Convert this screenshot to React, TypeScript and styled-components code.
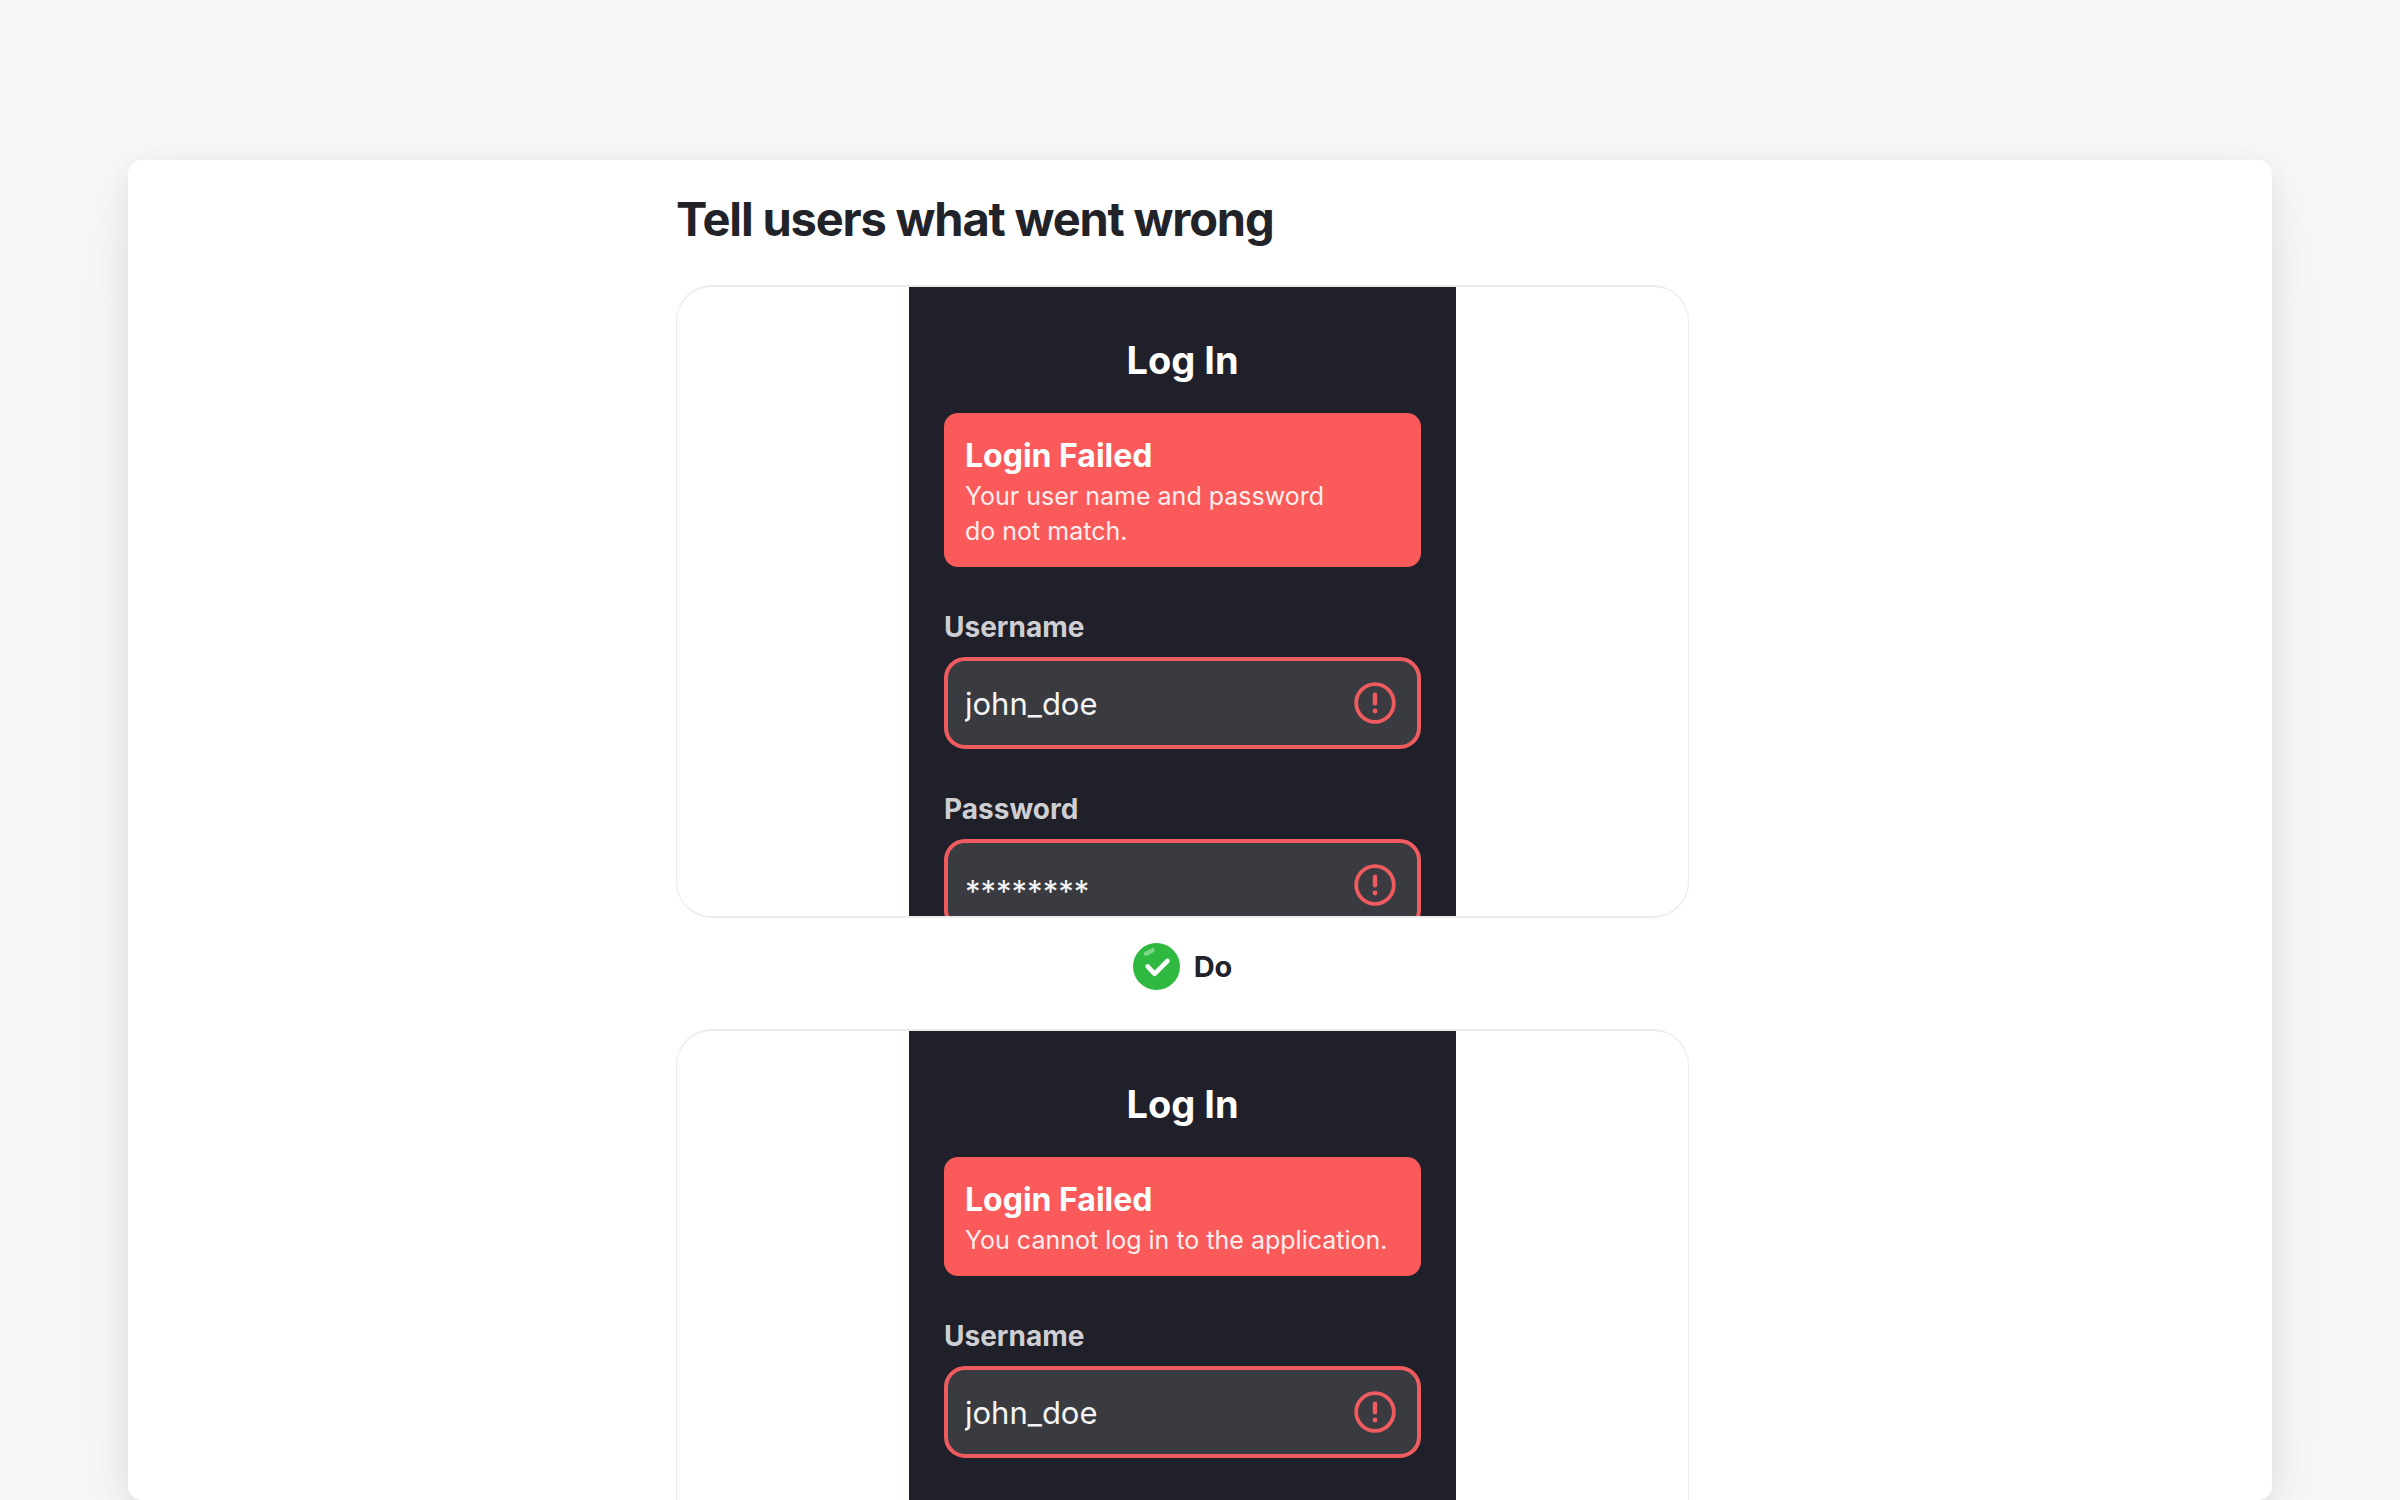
import React, { useId } from "react";
import styled, { createGlobalStyle } from "styled-components";

const GlobalStyle = createGlobalStyle`
  *, *::before, *::after { box-sizing: border-box; }
  body {
    margin: 0;
    background: #f8f8f8;
    font-family: Inter, "Liberation Sans", sans-serif;
    -webkit-font-smoothing: antialiased;
  }
`;

const Page = styled.div`
  display: flex;
  flex-direction: column;
  height: 100vh;
  padding: 160px 128px 0;
  overflow: hidden;
`;

const Panel = styled.main`
  flex: 1;
  min-height: 0;
  padding: 30px 35px 0 0;
  overflow: hidden;
  border-radius: 14px;
  background: #ffffff;
  box-shadow: 0 8px 32px rgba(0, 0, 0, 0.08), 0 32px 100px rgba(0, 0, 0, 0.06);
`;

const Article = styled.section`
  width: 100%;
  max-width: 1013px;
  margin: 0 auto;
`;

const Heading = styled.h2`
  margin: 0 0 37px;
  color: #222329;
  font-size: 47px;
  font-weight: 700;
  line-height: 58px;
  letter-spacing: -0.025em;
`;

const Figure = styled.figure`
  margin: 0;
`;

const Frame = styled.div`
  display: flex;
  justify-content: center;
  height: 633px;
  overflow: hidden;
  border: solid #ececec;
  border-width: 2px 1px;
  border-radius: 36px;
`;

const Caption = styled.figcaption`
  display: flex;
  align-items: center;
  justify-content: center;
  gap: 14px;
  padding: 25px 0 39px;
  color: #222329;
  font-size: 29px;
  font-weight: 700;
  line-height: 47px;
`;

const Phone = styled.form`
  width: 100%;
  max-width: 547px;
  padding: 50px 35px;
  background: #1f2029;
`;

const PhoneTitle = styled.h3`
  margin: 0 0 30px;
  color: #ffffff;
  font-size: 38px;
  font-weight: 700;
  line-height: 46px;
  text-align: center;
`;

const Alert = styled.div`
  padding: 23px 21px 18px;
  border-radius: 14px;
  background: #fa5a5a;
  color: #ffffff;
`;

const AlertTitle = styled.h4`
  margin: 0 0 3px;
  font-size: 32px;
  font-weight: 700;
  line-height: 40px;
`;

const AlertText = styled.p`
  margin: 0;
  color: #ffeeee;
  font-size: 25px;
  line-height: 35px;
  white-space: pre-line;
`;

const Field = styled.div`
  margin-top: 42px;
`;

const Label = styled.label`
  display: block;
  margin-bottom: 12px;
  color: #cfcfd3;
  font-size: 28px;
  font-weight: 700;
  line-height: 36px;
`;

const InputBox = styled.div`
  display: flex;
  align-items: center;
  height: 92px;
  padding: 0 21px 0 17px;
  border: 4px solid #ef5b5f;
  border-radius: 21px;
  background: #3a3b40;
`;

const Input = styled.input<{ $masked?: boolean }>`
  flex: 1;
  min-width: 0;
  height: 40px;
  padding: ${(p) => (p.$masked ? "12px 0 0" : "0")};
  border: 0;
  outline: 0;
  background: transparent;
  color: #f4f4f5;
  font-family: inherit;
  font-size: 31px;
`;

const AlertIcon = () => (
  <svg width="42" height="42" viewBox="0 0 42 42" fill="none" aria-hidden="true">
    <circle cx="21" cy="21" r="18.8" stroke="#ef5b5f" strokeWidth="3.8" />
    <path d="M21 12.6v8.6" stroke="#ef5b5f" strokeWidth="4.4" strokeLinecap="round" />
    <circle cx="21" cy="29" r="2.4" fill="#ef5b5f" />
  </svg>
);

const CheckIcon = () => (
  <svg width="47" height="47" viewBox="0 0 47 47" fill="none" aria-hidden="true">
    <circle cx="23.5" cy="23.5" r="23.5" fill="#2fb940" />
    <path d="M13 10.8 19.5 7.4" stroke="#7ed588" strokeWidth="4.4" strokeLinecap="round" />
    <path d="m14.6 23.4 7 7.4 12.8-12.8" stroke="#ffffff" strokeWidth="4.6" strokeLinecap="round" strokeLinejoin="round" />
  </svg>
);

interface FieldProps {
  label: string;
  value: string;
  masked?: boolean;
}

const InvalidField = ({ label, value, masked }: FieldProps) => {
  const id = useId();
  return (
    <Field>
      <Label htmlFor={id}>{label}</Label>
      <InputBox>
        <Input id={id} type="text" defaultValue={value} $masked={masked} autoComplete="off" spellCheck={false} aria-invalid="true" />
        <AlertIcon />
      </InputBox>
    </Field>
  );
};

const LoginExample = ({ message, fields }: { message: string; fields: FieldProps[] }) => (
  <Frame>
    <Phone>
      <PhoneTitle>Log In</PhoneTitle>
      <Alert role="alert">
        <AlertTitle>Login Failed</AlertTitle>
        <AlertText>{message}</AlertText>
      </Alert>
      {fields.map((field) => (
        <InvalidField key={field.label} {...field} />
      ))}
    </Phone>
  </Frame>
);

const username: FieldProps = { label: "Username", value: "john_doe" };
const password: FieldProps = { label: "Password", value: "********", masked: true };

export default function App() {
  return (
    <>
      <GlobalStyle />
      <Page>
        <Panel>
          <Article>
            <Heading>Tell users what went wrong</Heading>
            <Figure>
              <LoginExample
                message={"Your user name and password\ndo not match."}
                fields={[username, password]}
              />
              <Caption>
                <CheckIcon />
                Do
              </Caption>
            </Figure>
            <Figure>
              <LoginExample message="You cannot log in to the application." fields={[username]} />
            </Figure>
          </Article>
        </Panel>
      </Page>
    </>
  );
}
